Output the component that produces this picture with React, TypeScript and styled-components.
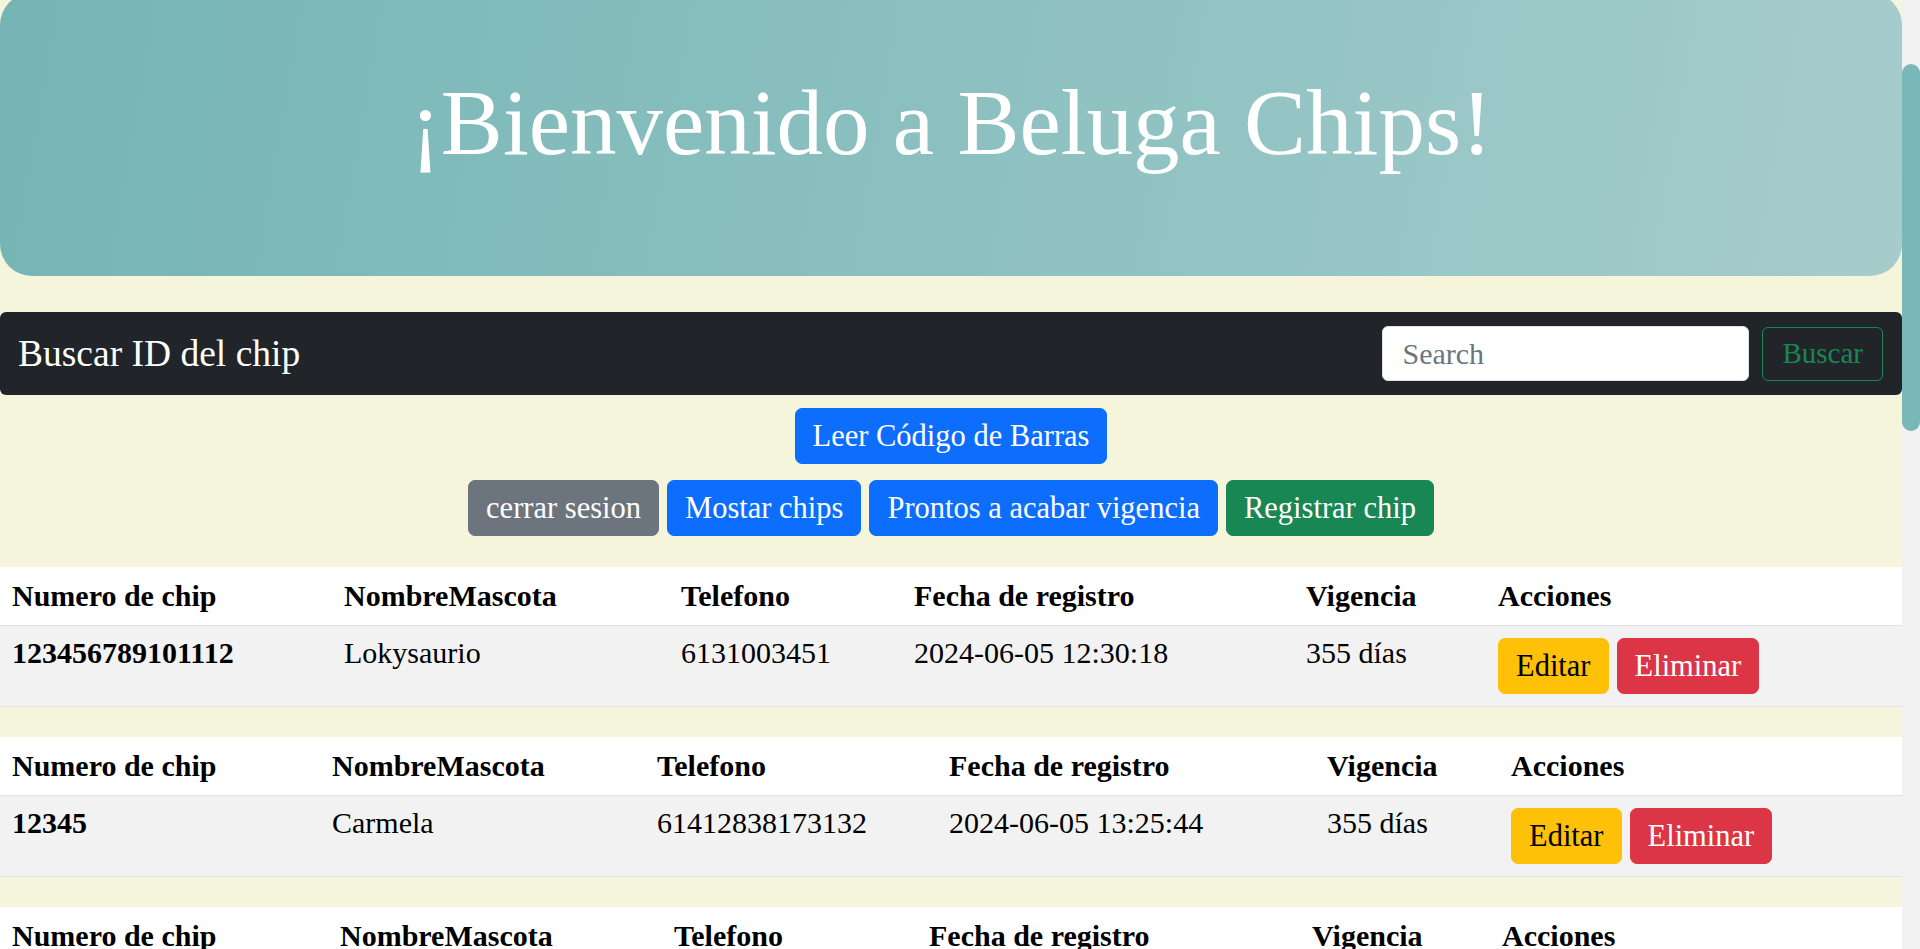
import React, { FC, ReactElement } from 'react';
import styled, { createGlobalStyle, css } from 'styled-components';

type Variant = 'primary' | 'secondary' | 'success' | 'warning' | 'danger';

interface Chip {
  id: string;
  name: string;
  phone: string;
  date: string;
  days: string;
  cols: number[];
}

const chips: Chip[] = [
  { id: '123456789101112', name: 'Lokysaurio', phone: '6131003451', date: '2024-06-05 12:30:18', days: '355 días', cols: [332, 337, 233, 392, 192, 416] },
  { id: '12345', name: 'Carmela', phone: '61412838173132', date: '2024-06-05 13:25:44', days: '355 días', cols: [320, 325, 292, 378, 184, 403] },
  { id: '987654321', name: 'Firulais Segundo', phone: '6141234567', date: '2024-06-05 16:02:11', days: '355 días', cols: [328, 334, 255, 383, 190, 412] },
  { id: '55501234', name: 'Manchas', phone: '6149876543', date: '2024-06-06 09:15:02', days: '356 días', cols: [330, 330, 260, 380, 190, 412] },
  { id: '44455566', name: 'Pelusa', phone: '6131112233', date: '2024-06-06 10:40:57', days: '356 días', cols: [330, 330, 260, 380, 190, 412] },
  { id: '77788899', name: 'Rocky', phone: '6145556677', date: '2024-06-07 11:05:30', days: '357 días', cols: [330, 330, 260, 380, 190, 412] },
  { id: '10203040', name: 'Canela', phone: '6132223344', date: '2024-06-07 17:22:08', days: '357 días', cols: [330, 330, 260, 380, 190, 412] },
  { id: '90807060', name: 'Toby', phone: '6148889900', date: '2024-06-08 08:48:19', days: '358 días', cols: [330, 330, 260, 380, 190, 412] },
];

const headers = ['Numero de chip', 'NombreMascota', 'Telefono', 'Fecha de registro', 'Vigencia', 'Acciones'];

const GlobalStyle = createGlobalStyle`
  html {
    scrollbar-width: none;
  }

  html, body {
    margin: 0;
    padding: 0;
  }

  body {
    background: #f5f5dc;
    font-family: "Liberation Serif", "Times New Roman", serif;
    color: #212529;
  }

  ::-webkit-scrollbar {
    display: none;
  }
`;

// the page's own scrollbar, drawn on top of the right edge
const ScrollRail = styled.div`
  position: fixed;
  top: 0;
  right: 0;
  bottom: 0;
  width: 18px;
  background: #f1f1f1;
`;

const ScrollThumb = styled.div`
  margin-top: 64px;
  height: 367px;
  border-radius: 10px;
  background: #79b8b8;
`;

const Page = styled.div`
  margin-right: 18px;
  padding-bottom: 12px;
`;

const Hero = styled.header`
  margin-top: -7px;
  height: 283px;
  box-sizing: border-box;
  padding-top: 77px;
  border-radius: 32px;
  background: linear-gradient(100deg, #76b5b5 0%, #8cc0c0 50%, #a6cccc 100%);
`;

const HeroTitle = styled.h1`
  margin: 0;
  text-align: center;
  color: #fff;
  font-weight: 400;
  font-size: 93px;
  line-height: 1.15;
`;

const SearchBar = styled.nav`
  margin-top: 36px;
  height: 83px;
  box-sizing: border-box;
  padding: 0 19px 0 18px;
  display: flex;
  align-items: center;
  justify-content: space-between;
  background: #212529;
  border-radius: 6px;
`;

const Brand = styled.span`
  color: #fff;
  font-size: 37.5px;
  line-height: 1.2;
`;

const SearchForm = styled.form`
  display: flex;
  align-items: center;
  gap: 13px;
`;

const SearchInput = styled.input`
  width: 367px;
  height: 55px;
  box-sizing: border-box;
  padding: 0 19px;
  border: 1px solid #dee2e6;
  border-radius: 6px;
  background: #fff;
  font-family: inherit;
  font-size: 30px;
  color: #212529;
  outline: none;

  &::placeholder {
    color: #6c757d;
  }
`;

const OutlineButton = styled.button`
  height: 54px;
  box-sizing: border-box;
  padding: 0 19px;
  border: 1px solid #198754;
  border-radius: 6px;
  background: transparent;
  color: #198754;
  font-family: inherit;
  font-size: 29px;
`;

const ButtonRow = styled.div<{ $top: number }>`
  display: flex;
  justify-content: center;
  gap: 8px;
  margin-top: ${({ $top }) => $top}px;
`;

const palette: Record<Variant, { bg: string; fg: string }> = {
  primary: { bg: '#0d6efd', fg: '#fff' },
  secondary: { bg: '#6c757d', fg: '#fff' },
  success: { bg: '#198754', fg: '#fff' },
  warning: { bg: '#ffc107', fg: '#000' },
  danger: { bg: '#dc3545', fg: '#fff' },
};

const Button = styled.button<{ $variant: Variant }>`
  padding: 8px 17px;
  border: 1px solid transparent;
  border-radius: 7px;
  font-family: inherit;
  font-size: 30.5px;
  line-height: 38px;
  white-space: nowrap;
  ${({ $variant }) => css`
    background: ${palette[$variant].bg};
    border-color: ${palette[$variant].bg};
    color: ${palette[$variant].fg};
  `}
`;

const TableList = styled.div`
  margin-top: 31px;
  display: flex;
  flex-direction: column;
  gap: 30px;
`;

const ChipTable = styled.table`
  width: 100%;
  table-layout: fixed;
  border-collapse: collapse;
  font-size: 30px;
`;

const Col = styled.col<{ $w: number }>`
  width: ${({ $w }) => $w}px;
`;

const HeadRow = styled.tr`
  background: #fff;
  border-bottom: 1px solid #dee2e6;
`;

const BodyRow = styled.tr`
  background: #f2f2f2;
  border-bottom: 1px solid #dee2e6;
`;

const HeadCell = styled.th`
  padding: 7px 12px;
  line-height: 44px;
  text-align: left;
  font-weight: 700;
  color: #000;
  white-space: nowrap;
`;

const Cell = styled.td<{ $bold?: boolean }>`
  padding: 5px 12px 0;
  height: 75px;
  vertical-align: top;
  line-height: 44px;
  color: #000;
  white-space: nowrap;
  font-weight: ${({ $bold }) => ($bold ? 700 : 400)};
`;

const ActionCell = styled.td`
  padding: 12px 12px 0;
  vertical-align: top;
  white-space: nowrap;
`;

const Actions = styled.div`
  display: flex;
  gap: 8px;
`;

const ChipRow: FC<{ chip: Chip }> = ({ chip }): ReactElement =>
  <ChipTable>
    <colgroup>
      {chip.cols.map((w, i) => <Col key={i} $w={w} />)}
    </colgroup>
    <thead>
      <HeadRow>
        {headers.map(h => <HeadCell key={h}>{h}</HeadCell>)}
      </HeadRow>
    </thead>
    <tbody>
      <BodyRow>
        <Cell $bold>{chip.id}</Cell>
        <Cell>{chip.name}</Cell>
        <Cell>{chip.phone}</Cell>
        <Cell>{chip.date}</Cell>
        <Cell>{chip.days}</Cell>
        <ActionCell>
          <Actions>
            <Button $variant="warning">Editar</Button>
            <Button $variant="danger">Eliminar</Button>
          </Actions>
        </ActionCell>
      </BodyRow>
    </tbody>
  </ChipTable>

const App: FC = (): ReactElement =>
  <Page>
    <GlobalStyle />
    <Hero>
      <HeroTitle>¡Bienvenido a Beluga Chips!</HeroTitle>
    </Hero>
    <SearchBar>
      <Brand>Buscar ID del chip</Brand>
      <SearchForm onSubmit={e => e.preventDefault()}>
        <SearchInput type="search" placeholder="Search" />
        <OutlineButton type="submit">Buscar</OutlineButton>
      </SearchForm>
    </SearchBar>
    <ButtonRow $top={13}>
      <Button $variant="primary">Leer Código de Barras</Button>
    </ButtonRow>
    <ButtonRow $top={16}>
      <Button $variant="secondary">cerrar sesion</Button>
      <Button $variant="primary">Mostar chips</Button>
      <Button $variant="primary">Prontos a acabar vigencia</Button>
      <Button $variant="success">Registrar chip</Button>
    </ButtonRow>
    <TableList>
      {chips.map(chip => <ChipRow key={chip.id} chip={chip} />)}
    </TableList>
    <ScrollRail>
      <ScrollThumb />
    </ScrollRail>
  </Page>

export default App;
